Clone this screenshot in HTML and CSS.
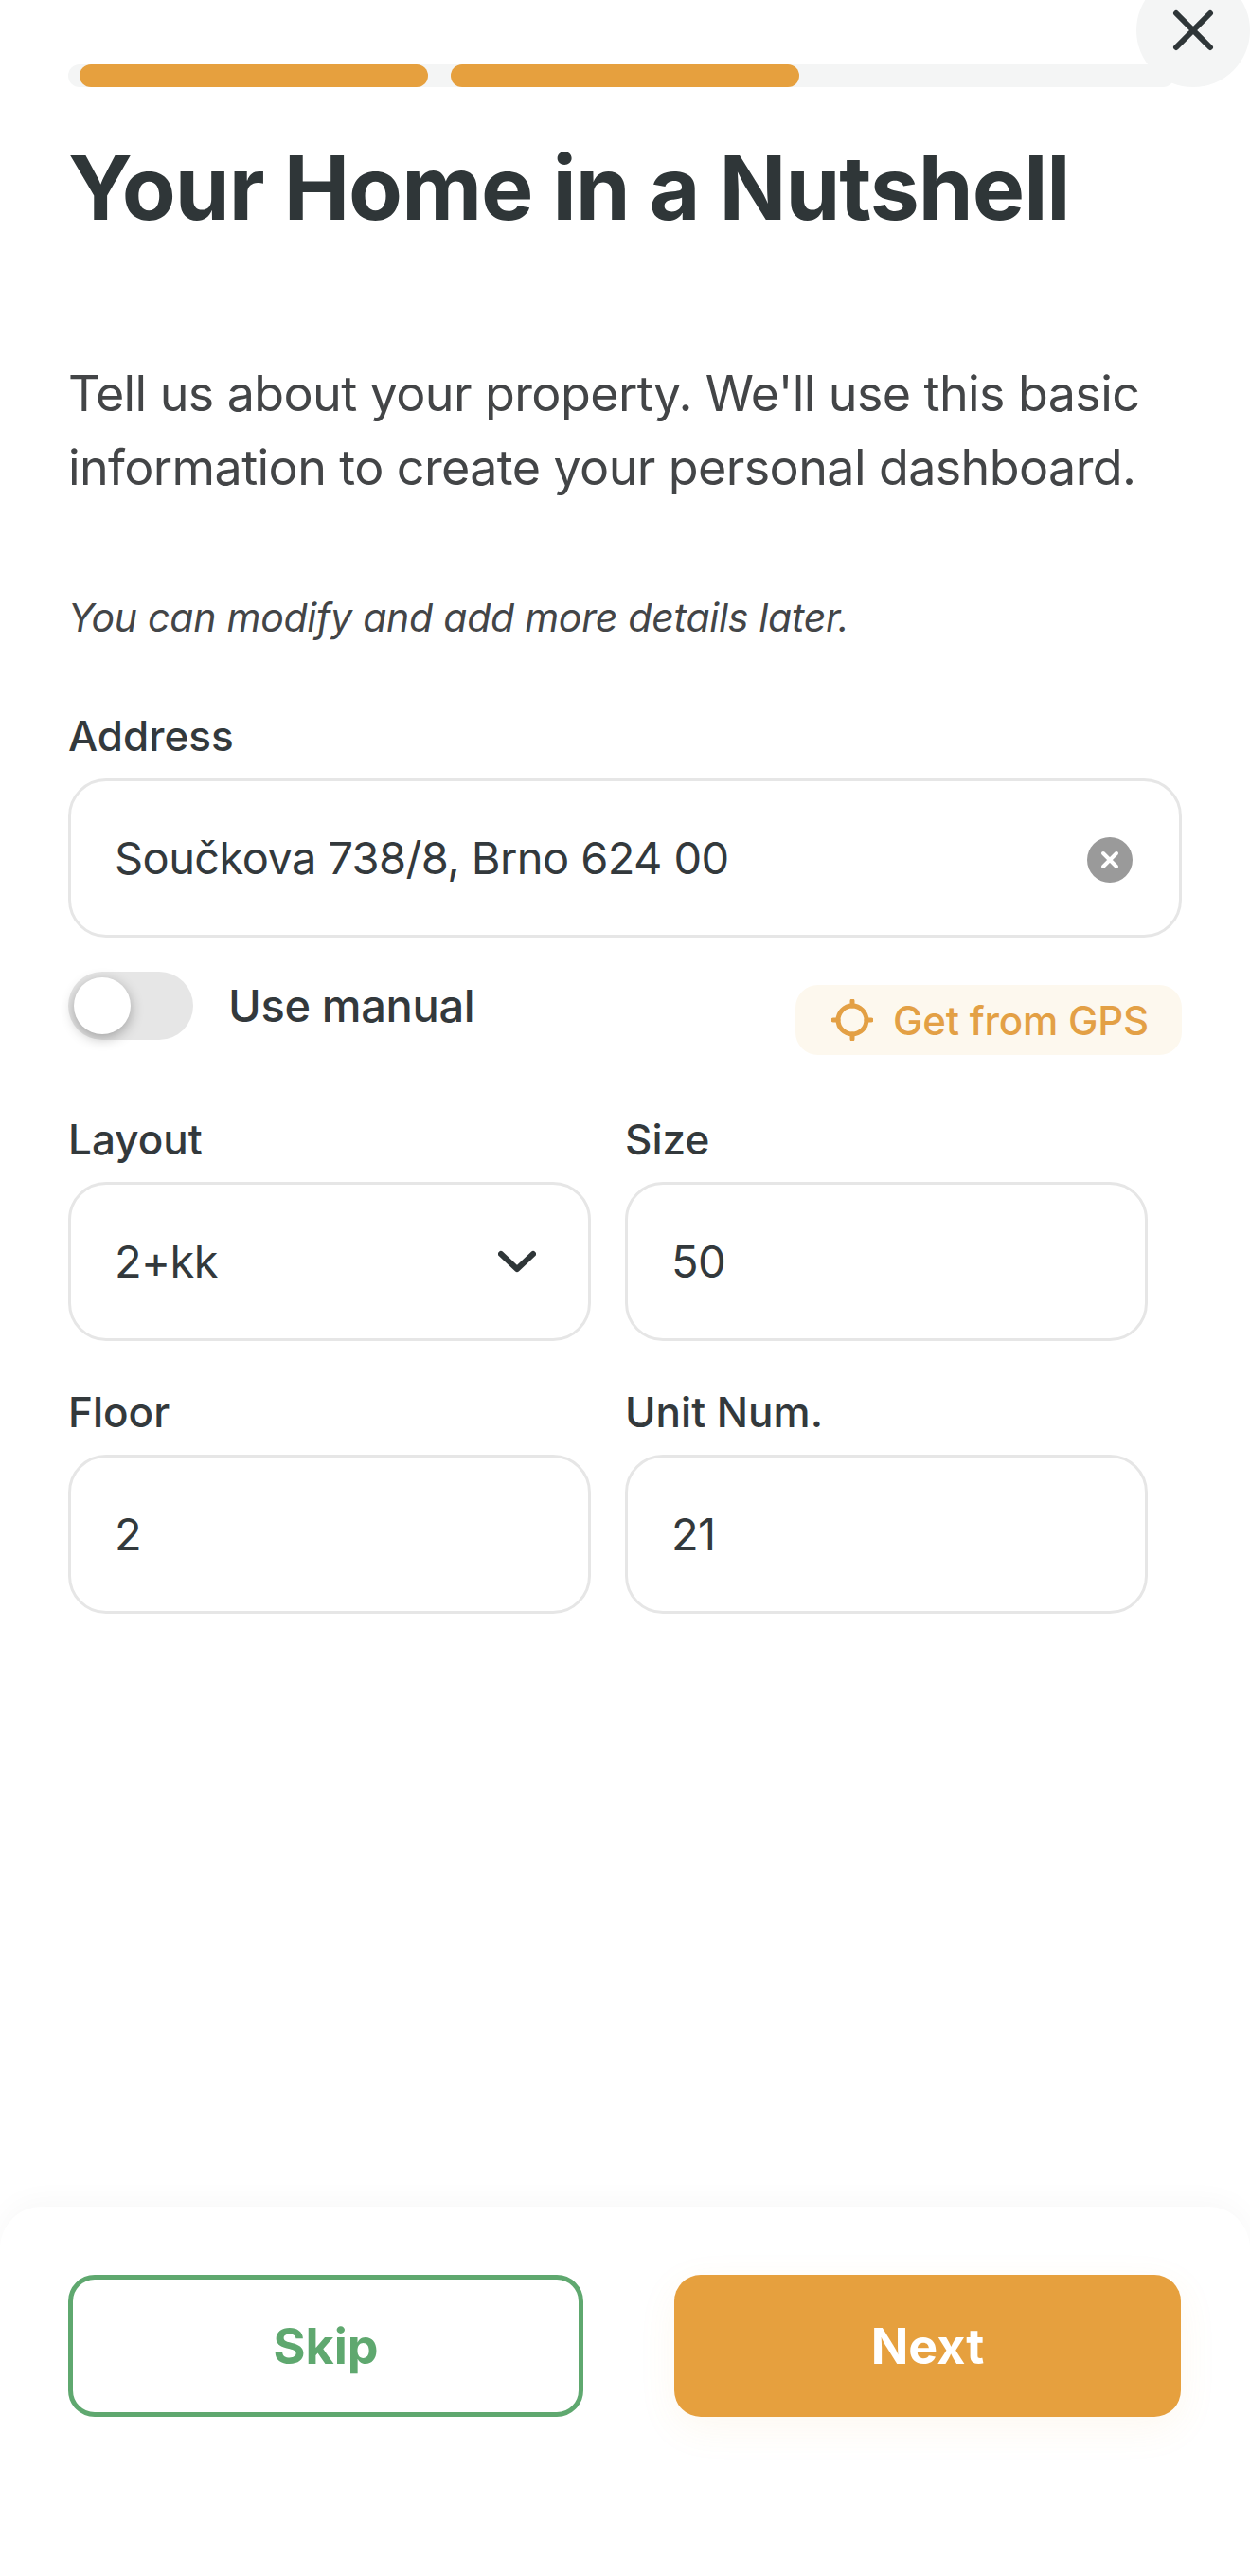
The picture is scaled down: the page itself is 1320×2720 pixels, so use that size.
FILE: index.html
```html
<!DOCTYPE html>
<html lang="en">
<head>
    <meta charset="UTF-8">
    <title>Your Home in a Nutshell</title>
    <link rel="stylesheet" href="styles.css">
</head>
<body>
    <button class="close-btn" aria-label="Close">
        <svg width="44" height="44" viewBox="0 0 44 44"><path d="M4 4L40 40M40 4L4 40" /></svg>
    </button>

    <main class="content">
        <div class="progress">
            <div class="progress-step"></div>
            <div class="progress-step"></div>
        </div>

        <h1>Your Home in a Nutshell</h1>
        <p class="intro">Tell us about your property. We'll use this basic information to create your personal dashboard.</p>
        <p class="note">You can modify and add more details later.</p>

        <label class="field-label">Address</label>
        <div class="input input-wide">
            <span>Součkova 738/8, Brno 624 00</span>
            <svg class="clear-icon" width="50" height="50" viewBox="0 0 50 50">
                <circle cx="25" cy="25" r="24" />
                <path d="M18 18L32 32M32 18L18 32" />
            </svg>
        </div>

        <div class="address-tools">
            <div class="toggle-group">
                <div class="toggle"><div class="toggle-knob"></div></div>
                <span>Use manual</span>
            </div>
            <button class="gps-btn">
                <svg width="44" height="44" viewBox="0 0 44 44">
                    <circle cx="22" cy="22" r="15" />
                    <path d="M22 2V7M22 37V42M2 22H7M37 22H42" />
                </svg>
                Get from GPS
            </button>
        </div>

        <div class="field-grid">
            <div>
                <label class="field-label">Layout</label>
                <div class="input">
                    <span>2+kk</span>
                    <svg class="chevron" width="40" height="24" viewBox="0 0 40 24"><path d="M3 4L20 20L37 4" /></svg>
                </div>
            </div>
            <div>
                <label class="field-label">Size</label>
                <div class="input"><span>50</span></div>
            </div>
            <div>
                <label class="field-label">Floor</label>
                <div class="input"><span>2</span></div>
            </div>
            <div>
                <label class="field-label">Unit Num.</label>
                <div class="input"><span>21</span></div>
            </div>
        </div>
    </main>

    <footer class="bottom-panel">
        <button class="btn btn-skip">Skip</button>
        <button class="btn btn-next">Next</button>
    </footer>
</body>
</html>
```

FILE: styles.css
```css
* {
    box-sizing: border-box;
}
html, body {
    margin: 0;
    height: 2720px;
    overflow: hidden;
}
body {
    display: flex;
    flex-direction: column;
    position: relative;
    font-family: Inter, "Liberation Sans", sans-serif;
    color: #33393c;
    background-color: #ffffff;
}
button {
    font-family: inherit;
    border: none;
    padding: 0;
    cursor: pointer;
}
.close-btn {
    position: absolute;
    top: -28px;
    right: 0;
    width: 120px;
    height: 120px;
    border-radius: 50%;
    background-color: #f4f5f5;
    display: flex;
    align-items: center;
    justify-content: center;
}
.close-btn svg path {
    fill: none;
    stroke: #2f3638;
    stroke-width: 6;
    stroke-linecap: round;
}
.content {
    flex: 1;
    padding: 68px 72px 0;
}
.progress {
    display: flex;
    gap: 24px;
    width: 1168px;
    height: 24px;
    padding-left: 12px;
    border-radius: 12px;
    background-color: #f4f5f5;
}
.progress-step {
    width: 368px;
    border-radius: 12px;
    background-color: #e6a03e;
}
h1 {
    margin: 50px 0 0;
    font-size: 93px;
    line-height: 112px;
    font-weight: 700;
    letter-spacing: -1px;
    color: #2f3638;
}
.intro {
    margin: 123px 0 0;
    font-size: 52px;
    line-height: 78px;
    letter-spacing: -0.6px;
    color: #434547;
}
.note {
    margin: 91px 0 0;
    font-size: 41px;
    line-height: 56px;
    letter-spacing: -0.25px;
    font-style: italic;
    color: #434547;
}
.field-label {
    display: block;
    font-size: 44px;
    line-height: 54px;
    font-weight: 450;
    margin-bottom: 18px;
}
.content > .field-label {
    margin-top: 70px;
}
.input {
    display: flex;
    align-items: center;
    justify-content: space-between;
    height: 168px;
    padding: 0 48px 0 46px;
    border: 3px solid #e6e6e6;
    border-radius: 40px;
    font-size: 47px;
    letter-spacing: -0.6px;
}
.input span {
    margin-bottom: 2px;
}
.input-wide {
    width: 1176px;
}
.clear-icon {
    margin-top: 3px;
}
.clear-icon circle {
    fill: #9a9a9a;
}
.clear-icon path {
    fill: none;
    stroke: #ffffff;
    stroke-width: 4;
    stroke-linecap: round;
}
.chevron {
    margin-right: 7px;
}
.chevron path {
    fill: none;
    stroke: #2f3638;
    stroke-width: 6;
    stroke-linecap: round;
    stroke-linejoin: round;
}
.address-tools {
    display: flex;
    justify-content: space-between;
    align-items: flex-start;
    width: 1176px;
    margin-top: 36px;
}
.toggle-group {
    display: flex;
    align-items: center;
    gap: 37px;
    font-size: 47px;
    font-weight: 450;
    letter-spacing: -0.35px;
}
.toggle-group span {
    margin-bottom: 2px;
}
.toggle {
    width: 132px;
    height: 72px;
    padding: 6px;
    border-radius: 36px;
    background-color: #e6e6e6;
}
.toggle-knob {
    width: 60px;
    height: 60px;
    border-radius: 50%;
    background-color: #ffffff;
    box-shadow: 0 4px 14px rgba(0, 0, 0, 0.3);
}
.gps-btn {
    display: flex;
    align-items: center;
    gap: 21px;
    width: 408px;
    height: 74px;
    margin-top: 14px;
    padding-left: 38px;
    border-radius: 24px;
    background-color: #fdf8ee;
    color: #e3a045;
    font-size: 42px;
    font-weight: 500;
    letter-spacing: -0.2px;
}
.gps-btn svg {
    flex: none;
}
.gps-btn svg circle, .gps-btn svg path {
    fill: none;
    stroke: #e3a045;
    stroke-width: 5;
    stroke-linecap: round;
}
.field-grid {
    display: grid;
    grid-template-columns: 552px 552px;
    column-gap: 36px;
    row-gap: 48px;
    margin-top: 62px;
}
.bottom-panel {
    display: flex;
    justify-content: space-between;
    height: 390px;
    padding: 72px 73px 0 72px;
    border-radius: 44px 44px 0 0;
    background-color: #ffffff;
    box-shadow: 0 -6px 30px rgba(0, 0, 0, 0.03);
}
.btn {
    height: 150px;
    border-radius: 28px;
    font-size: 52px;
    font-weight: 700;
}
.btn-skip {
    width: 544px;
    border: 5px solid #5fa86f;
    background-color: #ffffff;
    color: #5fa86f;
}
.btn-next {
    width: 535px;
    background-color: #e6a03e;
    color: #ffffff;
    box-shadow: 0 12px 40px rgba(230, 160, 62, 0.08);
}
```
